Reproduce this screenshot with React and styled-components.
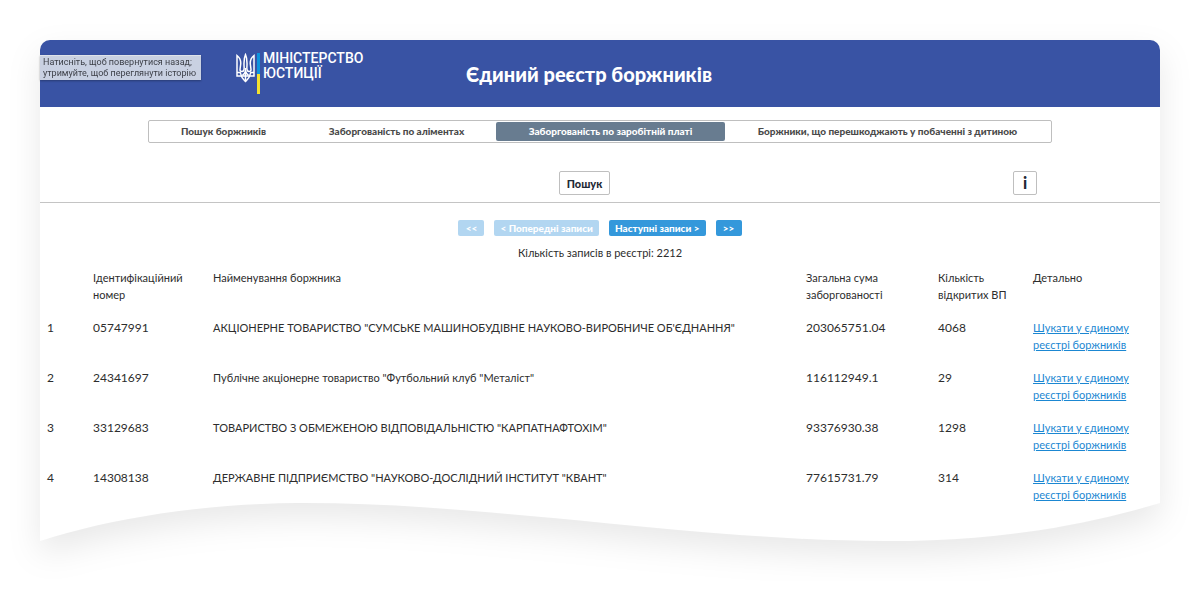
import styled, { createGlobalStyle } from 'styled-components';
import React from 'react';

const GlobalStyle = createGlobalStyle`
    * {
        box-sizing: border-box;
    }

    body {
        margin: 0;
        background: #fff;
        color: #2d2d2d;
        font-family: Lato, 'Open Sans', sans-serif;
        font-size: 11px;
        line-height: 17px;
    }

    button {
        font-family: inherit;
        cursor: pointer;
    }
`;

const Page = styled.div`
    padding: 40px;
`;

const Card = styled.div`
    position: relative;
    filter: drop-shadow(0 14px 16px rgba(0, 0, 0, 0.09));
`;

const Header = styled.header`
    display: grid;
    grid-template-columns: 1fr auto 1fr;
    height: 67px;
    padding-right: 22px;
    border-radius: 10px 10px 0 0;
    background: #3953a4;
    color: #fff;
`;

const Brand = styled.a`
    display: flex;
    align-items: flex-start;
    padding: 13px 0 0 196px;
    color: #fff;
    text-decoration: none;
`;

const FlagBar = styled.span`
    width: 3px;
    height: 41px;
    margin: 0 3px 0 2px;
    background: linear-gradient(#0d94dd 50%, #f3e12f 50%);
`;

const BrandName = styled.span`
    font: 500 14px/15px Roboto, sans-serif;
    margin-top: -2px;
`;

const Title = styled.h1`
    align-self: center;
    margin: 0;
    font-size: 20px;
    line-height: 24px;
    font-weight: 900;
`;

const Tooltip = styled.div`
    position: absolute;
    top: 15px;
    left: 0;
    padding: 1px 5px 1px 3px;
    border-top: 1px solid #dfe3ea;
    background: #c9d1e2;
    color: #3c3f47;
    box-shadow: 0 1px 2px rgba(0, 0, 0, 0.3);
    font: 9px/11px Roboto, sans-serif;
    white-space: nowrap;
`;

const Body = styled.main`
    background: #fff;
`;

const Tabs = styled.nav`
    display: grid;
    grid-template-columns: 147fr 199fr 229fr 325fr;
    margin: 0 108px;
    padding: 1px;
    border: 1px solid #bfbfbf;
    border-radius: 2px;
`;

const Tab = styled.button`
    height: 19px;
    padding: 0 0 1px;
    border: 0;
    border-radius: 2px;
    background: ${props => (props.$active ? '#687c90' : 'transparent')};
    color: ${props => (props.$active ? '#fff' : '#4a4a4a')};
    font-size: 10px;
    font-weight: 900;
    white-space: nowrap;
`;

const TabsRow = styled.div`
    padding: 13px 0 28px;
`;

const SearchRow = styled.div`
    display: grid;
    grid-template-columns: 1fr auto 1fr;
    padding: 0 123px 7px 92px;
    border-bottom: 1px solid #c4c4c4;
`;

const OutlineButton = styled.button`
    grid-column: 2;
    height: 24px;
    padding: 0 7px;
    border: 1px solid #bfbfbf;
    border-radius: 2px;
    background: #fff;
    color: #1f2a36;
    font-size: 11px;
    font-weight: 900;
`;

const InfoButton = styled(OutlineButton)`
    grid-column: 3;
    justify-self: end;
    display: flex;
    align-items: center;
    justify-content: center;
    width: 24px;
    padding: 0;
    font-size: 16px;
    line-height: 16px;
`;

const Pager = styled.div`
    display: flex;
    justify-content: center;
    gap: 10px;
    padding-top: 17px;
`;

const PageButton = styled.button`
    width: ${props => (props.$wide ? 'auto' : '26px')};
    height: 16px;
    padding: ${props => (props.$wide ? '0 6px' : '0')};
    border: 0;
    border-radius: 2px;
    background: #3498db;
    color: #fff;
    font-size: 10px;
    line-height: 16px;
    font-weight: 900;

    &:disabled {
        background: #b2d6f1;
        cursor: default;
    }
`;

const Total = styled.p`
    margin: 8px 0 0;
    text-align: center;
`;

const Table = styled.table`
    width: 100%;
    table-layout: fixed;
    border-collapse: collapse;
`;

const Col = styled.col`
    width: ${props => props.$width};
`;

const Th = styled.th`
    padding: 8px 7px;
    text-align: left;
    vertical-align: top;
    font-weight: 400;
`;

const Td = styled.td`
    padding: 8px 7px;
    vertical-align: top;
    font-size: ${props => (props.$numeric ? '12px' : '11px')};

    tr:last-child > & {
        padding-bottom: 0;
    }
`;

const DetailLink = styled.a`
    color: #1b87d2;
    text-decoration: underline;
`;

const Wave = styled.svg`
    display: block;
    width: 100%;
    height: 39px;
    margin-top: -1px;
`;

const debtors = [
    { code: '05747991', name: 'АКЦІОНЕРНЕ ТОВАРИСТВО "СУМСЬКЕ МАШИНОБУДІВНЕ НАУКОВО-ВИРОБНИЧЕ ОБ\'ЄДНАННЯ"', debt: '203065751.04', count: 4068 },
    { code: '24341697', name: 'Публічне акціонерне товариство "Футбольний клуб "Металіст"', debt: '116112949.1', count: 29 },
    { code: '33129683', name: 'ТОВАРИСТВО З ОБМЕЖЕНОЮ ВІДПОВІДАЛЬНІСТЮ "КАРПАТНАФТОХІМ"', debt: '93376930.38', count: 1298 },
    { code: '14308138', name: 'ДЕРЖАВНЕ ПІДПРИЄМСТВО "НАУКОВО-ДОСЛІДНИЙ ІНСТИТУТ "КВАНТ"', debt: '77615731.79', count: 314 },
];

const tabs = [
    'Пошук боржників',
    'Заборгованість по аліментах',
    'Заборгованість по заробітній платі',
    'Боржники, що перешкоджають у побаченні з дитиною',
];

const Trident = () => (
    <svg width="19" height="30" viewBox="0 0 19 30" fill="none" stroke="#fff" strokeWidth="1.5" aria-hidden="true">
        <path d="M1 2.500v20.500h4.400c.5 2 2 3.200 4.100 5.500 2.100-2.300 3.600-3.500 4.100-5.500H18V2.500c-2.800 2.200-4 4.800-3.700 8.500l.7 5.500c0 1.400-.8 2-1.800 2-2.100 0-2.500-2.200-2.300-4.500.3-4.500.3-9-1.400-12.500-1.700 3.500-1.700 8-1.400 12.500.2 2.300-.2 4.500-2.300 4.500-1 0-1.800-.6-1.800-2l.7-5.500C5 7.300 3.800 4.700 1 2.500z" />
        <path d="M1 19.500h3.200c.4 1 .8 2 1.200 3.500M18 19.500h-3.200c-.4 1-.8 2-1.200 3.500M9.500 15v13M5.400 23h8.200M9.500 17.500c-.4 2.500-1.500 3.800-3 4.700M9.500 17.500c.4 2.500 1.500 3.800 3 4.700" />
    </svg>
);

const App = () => (
    <Page>
        <GlobalStyle />
        <Card>
            <Header>
                <Brand href="#">
                    <Trident />
                    <FlagBar />
                    <BrandName>
                        МІНІСТЕРСТВО
                        <br />
                        ЮСТИЦІЇ
                    </BrandName>
                </Brand>
                <Title>Єдиний реєстр боржників</Title>
            </Header>
            <Tooltip role="tooltip">
                Натисніть, щоб повернутися назад;
                <br />
                утримуйте, щоб переглянути історію
            </Tooltip>
            <Body>
                <TabsRow>
                    <Tabs>
                        {tabs.map((tab, index) => (
                            <Tab key={tab} type="button" $active={index === 2}>{tab}</Tab>
                        ))}
                    </Tabs>
                </TabsRow>
                <SearchRow>
                    <OutlineButton type="button">Пошук</OutlineButton>
                    <InfoButton type="button">i</InfoButton>
                </SearchRow>
                <Pager>
                    <PageButton type="button" disabled>&lt;&lt;</PageButton>
                    <PageButton type="button" $wide disabled>&lt; Попередні записи</PageButton>
                    <PageButton type="button" $wide>Наступні записи &gt;</PageButton>
                    <PageButton type="button">&gt;&gt;</PageButton>
                </Pager>
                <Total>Кількість записів в реєстрі: 2212</Total>
                <Table>
                    <colgroup>
                        <Col $width="46px" />
                        <Col $width="120px" />
                        <Col />
                        <Col $width="132px" />
                        <Col $width="95px" />
                        <Col $width="134px" />
                    </colgroup>
                    <thead>
                        <tr>
                            <Th />
                            <Th>Ідентифікаційний номер</Th>
                            <Th>Найменування боржника</Th>
                            <Th>Загальна сума заборгованості</Th>
                            <Th>Кількість відкритих ВП</Th>
                            <Th>Детально</Th>
                        </tr>
                    </thead>
                    <tbody>
                        {debtors.map((item, index) => (
                            <tr key={item.code}>
                                <Td $numeric>{index + 1}</Td>
                                <Td $numeric>{item.code}</Td>
                                <Td>{item.name}</Td>
                                <Td $numeric>{item.debt}</Td>
                                <Td $numeric>{item.count}</Td>
                                <Td><DetailLink href="#">Шукати у єдиному реєстрі боржників</DetailLink></Td>
                            </tr>
                        ))}
                    </tbody>
                </Table>
            </Body>
            <Wave viewBox="0 0 1120 39" preserveAspectRatio="none" aria-hidden="true">
                <path d="M0 0H1120V1C1035 27 945 39 847 39C650 39 455 1 265 1C170 1 75 15 0 39z" fill="#fff" />
            </Wave>
        </Card>
    </Page>
);

export default App;
